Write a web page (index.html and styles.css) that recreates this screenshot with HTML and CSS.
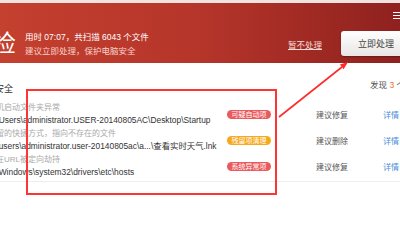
FILE: index.html
```html
<!DOCTYPE html>
<html>
<head>
    <meta name="viewport" content="width=device-width, initial-scale=1.0">
    <title>体检结果</title>
    <link rel="stylesheet" href="styles.css">
</head>
<body>
    <div class="topstrip"></div>
    <header class="hero">
        <span class="hero-char">检</span>
        <div class="hero-info">
            <p class="hero-line">用时 07:07，共扫描 6043 个文件</p>
            <p class="hero-sub">建议立即处理，保护电脑安全</p>
        </div>
        <a class="skip-link">暂不处理</a>
        <button class="fix-btn">立即处理</button>
        <span class="menu-icon"><i></i><i></i><i></i></span>
    </header>

    <section class="panel">
        <div class="panel-head">
            <span class="panel-title">安全</span>
            <span class="panel-count">发现 <b>3</b> 个问题</span>
        </div>
        <div class="issue-list">
            <div class="issue-row">
                <div class="issue-main">
                    <p class="issue-label">开机启动文件夹异常</p>
                    <p class="issue-path">C:\Users\administrator.USER-20140805AC\Desktop\Startup</p>
                </div>
                <span class="badge badge-red">可疑自动项</span>
                <span class="issue-action">建议修复</span>
                <a class="issue-detail">详情</a>
            </div>
            <div class="issue-row">
                <div class="issue-main">
                    <p class="issue-label">残留的快捷方式，指向不存在的文件</p>
                    <p class="issue-path">C:\users\administrator.user-20140805ac\a...\查看实时天气.lnk</p>
                </div>
                <span class="badge badge-orange">残留项清理</span>
                <span class="issue-action">建议删除</span>
                <a class="issue-detail">详情</a>
            </div>
            <div class="issue-row">
                <div class="issue-main">
                    <p class="issue-label">存在URL被定向劫持</p>
                    <p class="issue-path">C:\Windows\system32\drivers\etc\hosts</p>
                </div>
                <span class="badge badge-red">系统异常项</span>
                <span class="issue-action">建议修复</span>
                <a class="issue-detail">详情</a>
            </div>
        </div>
    </section>

    <div class="mark-box"></div>
    <svg class="mark-arrow" width="400" height="247" viewBox="0 0 400 247">
        <line x1="279" y1="117" x2="342" y2="67" stroke="#ff2b2b" stroke-width="1.6"/>
        <polygon points="348,62 343.6,69.3 339.9,64.6" fill="#ff2b2b"/>
    </svg>
</body>
</html>
```

FILE: styles.css
```css
body {
    margin: 0;
    width: 400px;
    height: 247px;
    overflow: hidden;
    position: relative;
    background: #fff;
    font-family: "Liberation Sans", "Noto Sans CJK SC", sans-serif;
}
p {
    margin: 0;
}
.topstrip {
    height: 3px;
    background: #f1e3e0;
}
.hero {
    position: relative;
    height: 60px;
    box-sizing: border-box;
    padding-top: 21px;
    display: flex;
    align-items: center;
    background: linear-gradient(to right, #c4402f, #b5352a 50%, #8f211e);
    color: #fff;
}
.hero-char {
    font-size: 24px;
    line-height: 26px;
    margin-left: -8px;
    margin-right: 9px;
}
.hero-info {
    font-size: 8.5px;
    line-height: 14px;
    white-space: nowrap;
}
.hero-sub {
    color: #f6d2cb;
}
.skip-link {
    margin-left: auto;
    margin-right: 19px;
    font-size: 8.5px;
    color: #f3dcd6;
    text-decoration: underline;
}
.fix-btn {
    width: 62px;
    height: 25px;
    margin-right: -3px;
    padding: 0 0 0 2px;
    text-align: left;
    text-indent: 15px;
    border: none;
    border-radius: 3px;
    background: linear-gradient(#ffffff, #e9e5e4);
    box-shadow: 0 1px 2px rgba(0, 0, 0, 0.3);
    font-family: inherit;
    font-size: 9px;
    color: #444;
}
.menu-icon {
    position: absolute;
    top: 9px;
    right: 0;
    width: 7px;
    display: flex;
    flex-direction: column;
    gap: 2px;
}
.menu-icon i {
    display: block;
    height: 1px;
    background: #fff;
}
.panel {
    margin-left: -12px;
}
.panel-head {
    height: 38px;
    display: flex;
    align-items: flex-start;
}
.panel-title {
    margin-left: 7px;
    margin-top: 21px;
    font-size: 9px;
    line-height: 10px;
    color: #333;
}
.panel-count {
    margin-left: auto;
    margin-right: -22px;
    margin-top: 17px;
    font-size: 8.5px;
    line-height: 10px;
    color: #555;
    white-space: nowrap;
}
.panel-count b {
    font-weight: normal;
    color: #f26a2e;
}
.issue-list {
    padding-bottom: 2px;
    border-bottom: 1px solid #eeeeee;
}
.issue-row {
    display: grid;
    grid-template-columns: 239px 89px 67px 1fr;
    align-items: center;
    height: 26px;
}
.issue-main {
    white-space: nowrap;
}
.issue-label {
    font-size: 8px;
    line-height: 12px;
    color: #a9a9a9;
}
.issue-path {
    font-size: 8.4px;
    line-height: 12px;
    color: #333;
}
.badge {
    width: 44px;
    height: 9px;
    border-radius: 5px;
    font-size: 7px;
    line-height: 9px;
    text-align: center;
    color: #fff;
    white-space: nowrap;
}
.badge-red {
    background: #ea5a5c;
}
.badge-orange {
    background: #f6a91c;
}
.issue-action {
    font-size: 8px;
    color: #555;
}
.issue-detail {
    font-size: 8px;
    color: #4a8dd6;
}
.mark-box {
    position: absolute;
    left: 26px;
    top: 89px;
    width: 251px;
    height: 106px;
    box-sizing: border-box;
    border: 2px solid #ff3434;
}
.mark-arrow {
    position: absolute;
    left: 0;
    top: 0;
}
```
